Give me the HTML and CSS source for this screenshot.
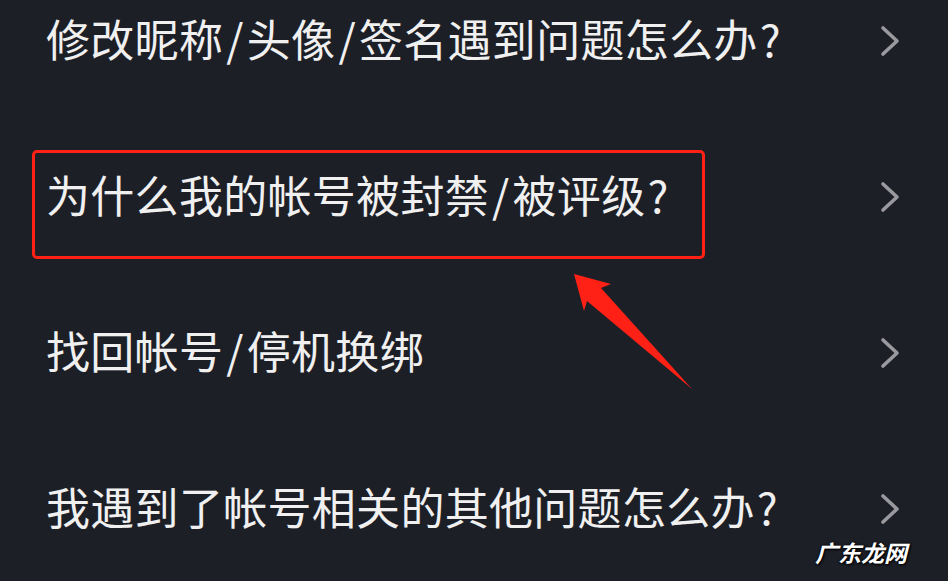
FILE: index.html
```html
<!DOCTYPE html>
<html lang="zh-CN">
<head>
<meta charset="utf-8">
<link rel="stylesheet" href="styles.css">
</head>
<body>
<div class="screen">
  <ul class="list">
    <li class="row"><span class="label">修改昵称<span class="sl">/</span>头像<span class="sl">/</span>签名遇到问题怎么办<span class="q">?</span></span><svg class="chev" viewBox="0 0 20 32"><path d="M3 3 L17 16 L3 29"/></svg></li>
    <li class="row"><span class="label">为什么我的帐号被封禁<span class="sl">/</span>被评级<span class="q">?</span></span><svg class="chev" viewBox="0 0 20 32"><path d="M3 3 L17 16 L3 29"/></svg></li>
    <li class="row"><span class="label">找回帐号<span class="sl">/</span>停机换绑</span><svg class="chev" viewBox="0 0 20 32"><path d="M3 3 L17 16 L3 29"/></svg></li>
    <li class="row"><span class="label">我遇到了帐号相关的其他问题怎么办<span class="q">?</span></span><svg class="chev" viewBox="0 0 20 32"><path d="M3 3 L17 16 L3 29"/></svg></li>
  </ul>
  <div class="highlight"></div>
  <svg class="arrow" width="948" height="581" viewBox="0 0 948 581">
    <polygon points="574,274 611,284 601,288 692,389 587,301 584,311"/>
  </svg>
  <div class="watermark">广东龙网</div>
</div>
</body>
</html>
```
FILE: styles.css
```css
html, body {
  margin: 0;
  padding: 0;
  background: #1d1f27;
}
.screen {
  position: relative;
  width: 948px;
  height: 581px;
  overflow: hidden;
  background: #1d1f27;
  font-family: "Noto Sans CJK SC", "Noto Sans", sans-serif;
}
.list {
  list-style: none;
  margin: -37px 0 0 0;
  padding: 0;
}
.row {
  display: flex;
  align-items: center;
  justify-content: space-between;
  height: 156px;
  padding: 0 48px 0 46px;
}
.label {
  color: #f0f0f0;
  font-size: 44px;
  line-height: 1;
  letter-spacing: 0.3px;
  margin-bottom: 7px;
}
.sl {
  margin: 0 3px;
}
.q {
  margin-left: 2px;
  letter-spacing: 0;
}
.chev {
  width: 20px;
  height: 32px;
  fill: none;
  stroke: #9a9a9e;
  stroke-width: 3.6;
  stroke-linecap: round;
  stroke-linejoin: round;
}
.highlight {
  position: absolute;
  left: 32px;
  top: 150px;
  width: 667px;
  height: 103px;
  border: 3px solid #ff2116;
  border-radius: 5px;
}
.arrow {
  position: absolute;
  left: 0;
  top: 0;
  fill: #ff2116;
}
.watermark {
  position: absolute;
  left: 815px;
  top: 536px;
  color: #ffffff;
  font-size: 23px;
  line-height: 32px;
  font-weight: 700;
  font-style: italic;
  text-shadow: 0 0 3px #000, 1px 1px 2px #000;
}
```
